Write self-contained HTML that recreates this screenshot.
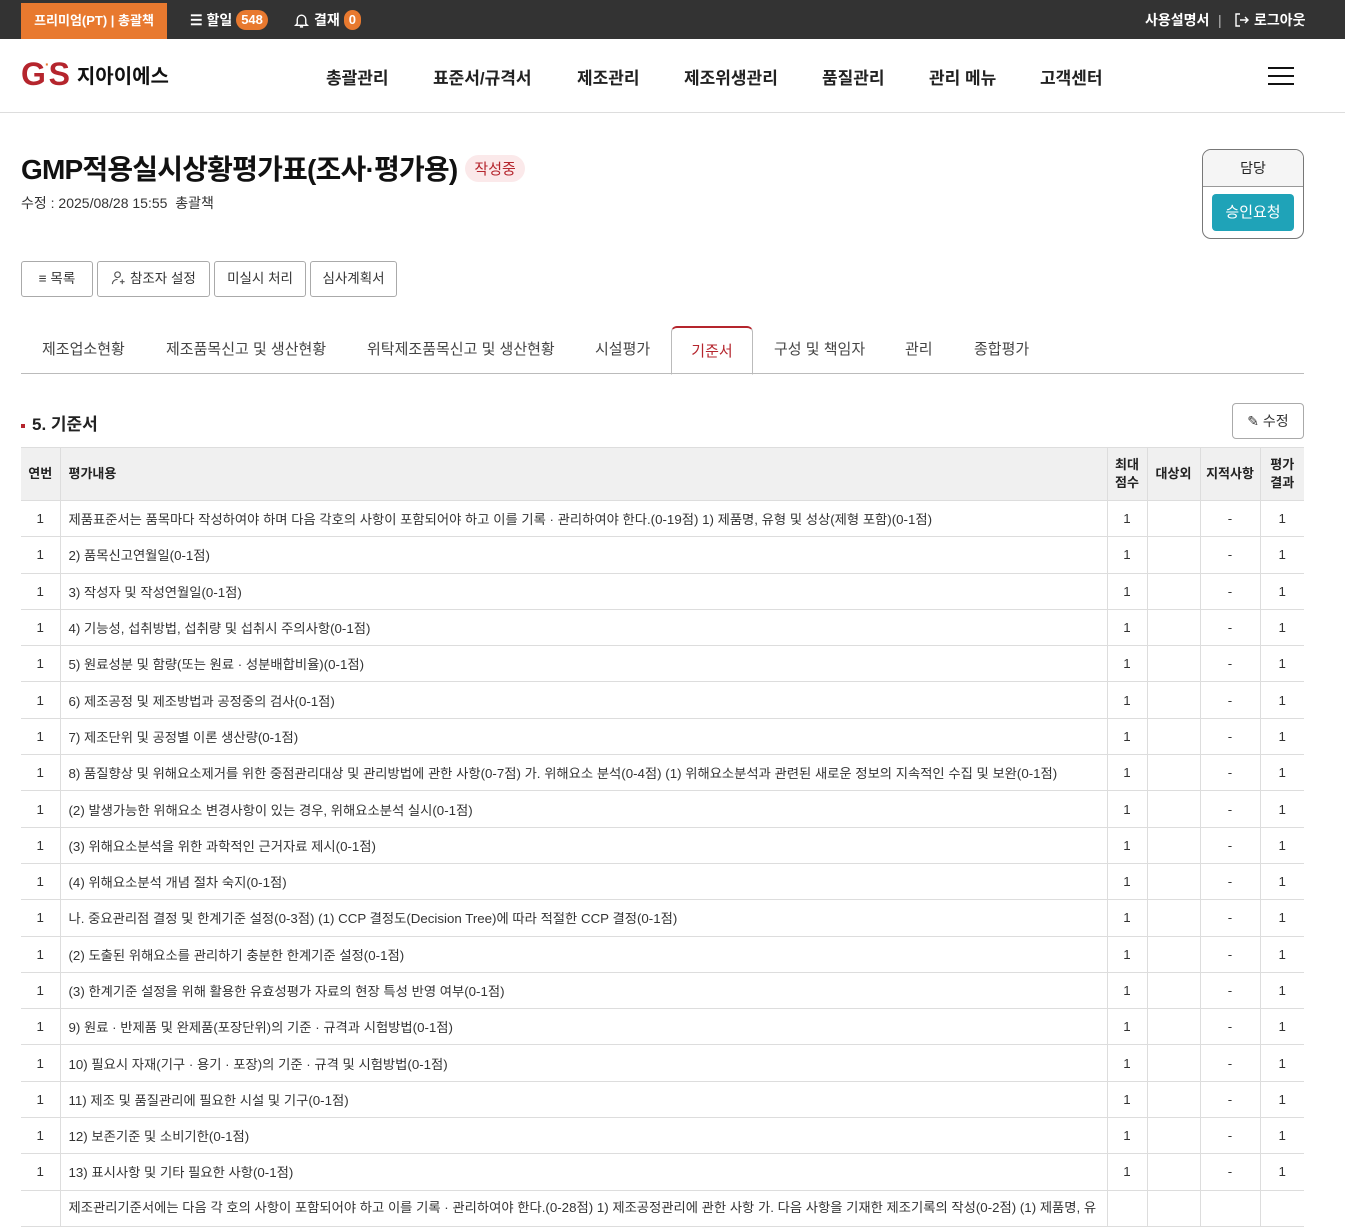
<!DOCTYPE html>
<html><head><meta charset="utf-8"><style>
*{box-sizing:border-box;margin:0;padding:0}
body{width:1345px;height:1208px;overflow:hidden;background:#fff;font-family:"Liberation Sans","Noto Sans CJK KR",sans-serif;color:#222}
.top{height:39px;background:#333;position:relative;color:#fff;font-size:14px;font-weight:bold}
.prem{position:absolute;left:21px;top:3px;height:36px;width:146px;background:#e8792f;text-align:center;line-height:35px;font-size:13px}
.ti{position:absolute;top:0;line-height:40px;display:flex;align-items:center;gap:4px}
.badge{background:#e8792f;border-radius:10px;padding:0 5px;line-height:20px;font-size:13px}
.hdr{height:74px;border-bottom:1px solid #ddd;position:relative}
.logo{position:absolute;left:21px;top:17px;display:flex;align-items:center;gap:8px}
.logo b{font-size:32px;color:#b5252d;letter-spacing:-1px;font-family:"Liberation Sans",sans-serif}
.logo span{font-size:20px;font-weight:bold;color:#111}
.nav{position:absolute;top:25px;font-size:17px;font-weight:bold;color:#222}
.ham{position:absolute;left:1268px;top:28px;width:26px}
.ham i{display:block;height:2px;background:#111;margin-bottom:6px}
h1{position:absolute;left:21px;top:148px;font-size:28px;font-weight:bold;letter-spacing:-0.8px;color:#111}
.st{display:inline-block;vertical-align:middle;background:#fbe9ea;color:#b5252d;font-size:15px;border-radius:14px;padding:3px 9px;margin-left:8px;letter-spacing:0;font-weight:normal;position:relative;top:-3px}
.sub{position:absolute;left:21px;top:193px;font-size:14px;color:#333}
.appr{position:absolute;left:1202px;top:149px;width:102px;height:90px;border:1px solid #777;border-radius:9px;overflow:hidden}
.appr .h{height:37px;background:#f5f5f5;border-bottom:1px solid #999;text-align:center;line-height:37px;font-size:14px}
.appr .b{margin:7px 9px;height:37px;background:#1fa3b8;border-radius:4px;color:#fff;text-align:center;line-height:37px;font-size:15px}
.btn{position:absolute;top:261px;height:36px;border:1px solid #aaa;border-radius:3px;line-height:34px;font-size:13.5px;color:#333;background:#fff;white-space:nowrap;text-align:center}
.tabs{position:absolute;left:21px;top:326px;width:1283px;height:48px;border-bottom:1px solid #bbb}
.tab{position:absolute;top:0;line-height:48px;font-size:15px;color:#444;white-space:nowrap}
.tab.on{color:#b5252d;border:1px solid #bbb;border-top:2px solid #b5252d;border-bottom:1px solid #fff;border-radius:6px 6px 0 0;height:49px;line-height:47px;text-align:center}
.sec{position:absolute;left:21px;top:410px;font-size:17px;font-weight:bold}
.sec:before{content:"";display:inline-block;width:4px;height:4px;background:#b5252d;margin-right:7px;vertical-align:middle}
.edit{position:absolute;left:1232px;top:403px;width:72px;height:36px;border:1px solid #aaa;border-radius:4px;font-size:14px;line-height:34px;text-align:center;color:#333}
table{position:absolute;left:21px;top:447px;width:1283px;border-collapse:collapse;table-layout:fixed;font-size:13.3px;color:#333}
th{background:#f0f0f0;height:53px;font-weight:bold;font-size:13px;border-left:1px solid #ddd;border-bottom:1px solid #ddd;border-top:1px solid #ddd;line-height:18px;color:#222}
th:first-child,td:first-child{border-left:none}
td{height:36.3px;border-left:1px solid #ddd;border-bottom:1px solid #ddd;text-align:center;white-space:nowrap;overflow:hidden}
td.l,th.l{text-align:left;padding-left:8px}
</style></head><body>
<div class="top">
<div class="prem">프리미엄(PT) | 총괄책</div>
<div class="ti" style="left:190px">☰ 할일 <span class="badge">548</span></div>
<div class="ti" style="left:293px"><svg width="17" height="17" viewBox="0 0 16 16" fill="none" stroke="#fff" stroke-width="1.3"><path d="M4 11V7a4 4 0 018 0v4l1.5 1.5h-11z M6.5 14h3"/></svg> 결재 <span class="badge">0</span></div>
<div class="ti" style="left:1145px">사용설명서</div>
<div class="ti" style="left:1218px;font-weight:normal;color:#bbb">|</div>
<div class="ti" style="left:1234px"><svg width="16" height="16" viewBox="0 0 16 16" fill="none" stroke="#fff" stroke-width="1.4"><path d="M6 2H2v12h4M6 8h8M11 5l3 3-3 3"/></svg> 로그아웃</div>
</div>
<div class="hdr">
<div class="logo"><b>G<span style="color:#e8792f;font-size:14px;vertical-align:top;font-weight:bold">·</span>S</b><span>지아이에스</span></div>
<div class="nav" style="left:326px">총괄관리</div>
<div class="nav" style="left:433px">표준서/규격서</div>
<div class="nav" style="left:577px">제조관리</div>
<div class="nav" style="left:684px">제조위생관리</div>
<div class="nav" style="left:822px">품질관리</div>
<div class="nav" style="left:929px">관리 메뉴</div>
<div class="nav" style="left:1040px">고객센터</div>
<div class="ham"><i></i><i></i><i></i></div>
</div>
<h1>GMP적용실시상황평가표(조사·평가용)<span class="st">작성중</span></h1>
<div class="sub">수정 : 2025/08/28 15:55 &nbsp;총괄책</div>
<div class="appr"><div class="h">담당</div><div class="b">승인요청</div></div>
<div class="btn" style="left:21px;width:72px">≡ 목록</div>
<div class="btn" style="left:97px;width:113px"><svg width="15" height="15" viewBox="0 0 16 16" fill="none" stroke="#555" stroke-width="1.2" style="vertical-align:-2px"><circle cx="7" cy="5" r="3"/><path d="M1.5 15c0-3 2.5-5 5.5-5M12 10v5M9.5 12.5h5"/></svg> 참조자 설정</div>
<div class="btn" style="left:214px;width:92px">미실시 처리</div>
<div class="btn" style="left:310px;width:87px">심사계획서</div>
<div class="tabs">
<div class="tab" style="left:21px">제조업소현황</div>
<div class="tab" style="left:145px">제조품목신고 및 생산현황</div>
<div class="tab" style="left:346px">위탁제조품목신고 및 생산현황</div>
<div class="tab" style="left:574px">시설평가</div>
<div class="tab on" style="left:650px;width:82px">기준서</div>
<div class="tab" style="left:753px">구성 및 책임자</div>
<div class="tab" style="left:884px">관리</div>
<div class="tab" style="left:953px">종합평가</div>
</div>
<div class="sec">5. 기준서</div>
<div class="edit">✎ 수정</div>
<table>
<colgroup><col style="width:39px"><col style="width:1047px"><col style="width:40px"><col style="width:53px"><col style="width:60px"><col style="width:44px"></colgroup>
<tr><th>연번</th><th class="l">평가내용</th><th>최대<br>점수</th><th>대상외</th><th>지적사항</th><th>평가<br>결과</th></tr>
<tr><td>1</td><td class="l">제품표준서는 품목마다 작성하여야 하며 다음 각호의 사항이 포함되어야 하고 이를 기록 · 관리하여야 한다.(0-19점) 1) 제품명, 유형 및 성상(제형 포함)(0-1점)</td><td>1</td><td></td><td>-</td><td>1</td></tr>
<tr><td>1</td><td class="l">2) 품목신고연월일(0-1점)</td><td>1</td><td></td><td>-</td><td>1</td></tr>
<tr><td>1</td><td class="l">3) 작성자 및 작성연월일(0-1점)</td><td>1</td><td></td><td>-</td><td>1</td></tr>
<tr><td>1</td><td class="l">4) 기능성, 섭취방법, 섭취량 및 섭취시 주의사항(0-1점)</td><td>1</td><td></td><td>-</td><td>1</td></tr>
<tr><td>1</td><td class="l">5) 원료성분 및 함량(또는 원료 · 성분배합비율)(0-1점)</td><td>1</td><td></td><td>-</td><td>1</td></tr>
<tr><td>1</td><td class="l">6) 제조공정 및 제조방법과 공정중의 검사(0-1점)</td><td>1</td><td></td><td>-</td><td>1</td></tr>
<tr><td>1</td><td class="l">7) 제조단위 및 공정별 이론 생산량(0-1점)</td><td>1</td><td></td><td>-</td><td>1</td></tr>
<tr><td>1</td><td class="l">8) 품질향상 및 위해요소제거를 위한 중점관리대상 및 관리방법에 관한 사항(0-7점) 가. 위해요소 분석(0-4점) (1) 위해요소분석과 관련된 새로운 정보의 지속적인 수집 및 보완(0-1점)</td><td>1</td><td></td><td>-</td><td>1</td></tr>
<tr><td>1</td><td class="l">(2) 발생가능한 위해요소 변경사항이 있는 경우, 위해요소분석 실시(0-1점)</td><td>1</td><td></td><td>-</td><td>1</td></tr>
<tr><td>1</td><td class="l">(3) 위해요소분석을 위한 과학적인 근거자료 제시(0-1점)</td><td>1</td><td></td><td>-</td><td>1</td></tr>
<tr><td>1</td><td class="l">(4) 위해요소분석 개념 절차 숙지(0-1점)</td><td>1</td><td></td><td>-</td><td>1</td></tr>
<tr><td>1</td><td class="l">나. 중요관리점 결정 및 한계기준 설정(0-3점) (1) CCP 결정도(Decision Tree)에 따라 적절한 CCP 결정(0-1점)</td><td>1</td><td></td><td>-</td><td>1</td></tr>
<tr><td>1</td><td class="l">(2) 도출된 위해요소를 관리하기 충분한 한계기준 설정(0-1점)</td><td>1</td><td></td><td>-</td><td>1</td></tr>
<tr><td>1</td><td class="l">(3) 한계기준 설정을 위해 활용한 유효성평가 자료의 현장 특성 반영 여부(0-1점)</td><td>1</td><td></td><td>-</td><td>1</td></tr>
<tr><td>1</td><td class="l">9) 원료 · 반제품 및 완제품(포장단위)의 기준 · 규격과 시험방법(0-1점)</td><td>1</td><td></td><td>-</td><td>1</td></tr>
<tr><td>1</td><td class="l">10) 필요시 자재(기구 · 용기 · 포장)의 기준 · 규격 및 시험방법(0-1점)</td><td>1</td><td></td><td>-</td><td>1</td></tr>
<tr><td>1</td><td class="l">11) 제조 및 품질관리에 필요한 시설 및 기구(0-1점)</td><td>1</td><td></td><td>-</td><td>1</td></tr>
<tr><td>1</td><td class="l">12) 보존기준 및 소비기한(0-1점)</td><td>1</td><td></td><td>-</td><td>1</td></tr>
<tr><td>1</td><td class="l">13) 표시사항 및 기타 필요한 사항(0-1점)</td><td>1</td><td></td><td>-</td><td>1</td></tr>
<tr><td></td><td class="l" style="vertical-align:top;padding-top:6px">제조관리기준서에는 다음 각 호의 사항이 포함되어야 하고 이를 기록 · 관리하여야 한다.(0-28점) 1) 제조공정관리에 관한 사항 가. 다음 사항을 기재한 제조기록의 작성(0-2점) (1) 제품명, 유</td><td></td><td></td><td></td><td></td></tr>
</table>
</body></html>
